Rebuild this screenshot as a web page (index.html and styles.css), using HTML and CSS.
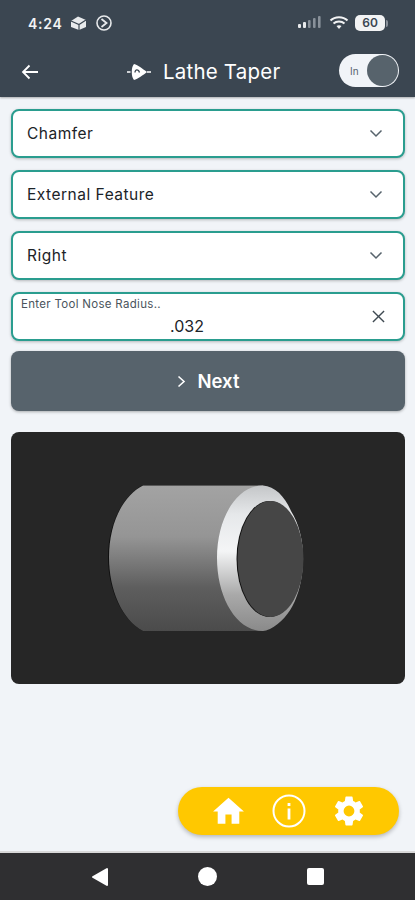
FILE: index.html
```html
<!DOCTYPE html>
<html>
<head>
<title>Lathe Taper</title>
<link rel="stylesheet" href="styles.css">
</head>
<body>

  <header class="app-header">
    <div class="status-bar">
      <div class="status-left">
        <span class="clock">4:24</span>
        <svg class="status-icon" width="17" height="16" viewBox="0 0 17 16">
          <path d="M1 6 L8 1.5 L16 5 V12 L9 15 L1 12 Z" fill="#e8eaec"/>
          <path d="M1 6 L9 9.5 L16 5 M9 9.5 V15" fill="none" stroke="#3b4651" stroke-width="1.2"/>
        </svg>
        <svg class="status-icon" width="18" height="18" viewBox="0 0 18 18">
          <circle cx="9" cy="9" r="7" fill="none" stroke="#e8eaec" stroke-width="1.6"/>
          <path d="M6.5 5 L11.5 9 L6.5 13" fill="none" stroke="#e8eaec" stroke-width="1.8"/>
        </svg>
      </div>
      <div class="status-right">
        <svg width="26" height="16" viewBox="0 0 26 16">
          <rect x="1" y="9" width="3" height="4" rx="1" fill="#e8eaec"/>
          <rect x="6" y="7" width="3" height="6" rx="1" fill="#e8eaec"/>
          <rect x="11" y="5" width="2.6" height="8" rx="1" fill="#89919a"/>
          <rect x="16" y="3" width="2.6" height="10" rx="1" fill="#89919a"/>
          <rect x="21" y="1" width="2.6" height="12" rx="1" fill="#89919a"/>
        </svg>
        <svg width="20" height="16" viewBox="0 0 20 16">
          <path d="M1.5 5.5 C6 1 14 1 18.5 5.5 M4.5 8.5 C7.5 5.8 12.5 5.8 15.5 8.5" fill="none" stroke="#f2f3f4" stroke-width="2"/>
          <path d="M7.5 11 C9 10 11 10 12.5 11 L10 14 Z" fill="#f2f3f4"/>
        </svg>
        <div class="battery"><span class="battery-level">60</span><span class="battery-cap"></span></div>
      </div>
    </div>
    <div class="title-bar">
      <svg class="back-arrow" width="18" height="16" viewBox="0 0 18 16">
        <path d="M17 8 H2 M8.5 1.5 L2 8 L8.5 14.5" fill="none" stroke="#fff" stroke-width="1.8"/>
      </svg>
      <div class="title-group">
        <svg width="24" height="18" viewBox="0 0 24 18">
          <path d="M7 1 C11 2 16 6 20 9 C16 12 11 16 7 17 C4 14 4 4 7 1 Z" fill="#fff"/>
          <path d="M0 9 H3.5 M20 9 H24" stroke="#fff" stroke-width="1.3"/>
          <path d="M8 9.5 C8 6 11.5 6 12.5 9.5" fill="none" stroke="#3b4651" stroke-width="1.3"/>
        </svg>
        <span class="app-title">Lathe Taper</span>
      </div>
      <div class="unit-toggle">
        <span class="unit-label">In</span>
        <span class="unit-knob"></span>
      </div>
    </div>
  </header>

  <main class="content">
    <div class="field select-field">
      <span>Chamfer</span>
      <svg class="chevron" width="14" height="9" viewBox="0 0 14 9"><path d="M1.5 1.5 L7 7 L12.5 1.5" fill="none" stroke="#57636c" stroke-width="1.5"/></svg>
    </div>
    <div class="field select-field">
      <span>External Feature</span>
      <svg class="chevron" width="14" height="9" viewBox="0 0 14 9"><path d="M1.5 1.5 L7 7 L12.5 1.5" fill="none" stroke="#57636c" stroke-width="1.5"/></svg>
    </div>
    <div class="field select-field">
      <span>Right</span>
      <svg class="chevron" width="14" height="9" viewBox="0 0 14 9"><path d="M1.5 1.5 L7 7 L12.5 1.5" fill="none" stroke="#57636c" stroke-width="1.5"/></svg>
    </div>
    <div class="field input-field">
      <div class="input-text">
        <span class="input-label">Enter Tool Nose Radius..</span>
        <span class="input-value">.032</span>
      </div>
      <svg class="clear-icon" width="13" height="13" viewBox="0 0 14 14"><path d="M1 1 L13 13 M13 1 L1 13" fill="none" stroke="#3f4a52" stroke-width="1.5"/></svg>
    </div>

    <button class="next-button">
      <svg width="9" height="13" viewBox="0 0 9 13"><path d="M1.5 1.5 L7 6.5 L1.5 11.5" fill="none" stroke="#fff" stroke-width="1.6"/></svg>
      <span>Next</span>
    </button>

    <div class="picture-card">
      <svg class="part-drawing" width="394" height="252" viewBox="11 432 394 252">
        <defs>
          <linearGradient id="bodyShade" x1="0" y1="0" x2="0" y2="1">
            <stop offset="0" stop-color="#a3a3a3"/>
            <stop offset="0.35" stop-color="#959595"/>
            <stop offset="0.7" stop-color="#5e5e5e"/>
            <stop offset="1" stop-color="#4b4b4b"/>
          </linearGradient>
          <linearGradient id="ringShade" x1="0" y1="0" x2="0" y2="1">
            <stop offset="0" stop-color="#c4c6c8"/>
            <stop offset="0.2" stop-color="#e6e8ea"/>
            <stop offset="0.45" stop-color="#f4f5f6"/>
            <stop offset="0.75" stop-color="#a9a9a9"/>
            <stop offset="1" stop-color="#8a8a8a"/>
          </linearGradient>
        </defs>
        <path class="part-edge" d="M143 485 H263 V631 H143 C122 620 108 590 108 557 C108 525 122 496 143 485 Z"/>
        <path d="M143 485.5 H263 V631 H143 C122 620 109 590 109 557 C109 525 122 496 143 485.5 Z" fill="url(#bodyShade)"/>
        <path d="M263 485.5 C275 486 285 497 291 511 C299 524 303 540 303 558 C303 590 292 618 270 629 C267 630 265 631 263 631 C236 631 217 597 217 558 C217 519 236 485.5 263 485.5 Z" fill="url(#ringShade)"/>
        <ellipse class="part-edge" cx="269.5" cy="559" rx="33" ry="58"/>
        <ellipse class="part-face" cx="270.5" cy="559" rx="33" ry="58"/>
      </svg>
    </div>
  </main>

  <div class="nav-row">
    <nav class="nav-pill">
      <svg width="37" height="37" viewBox="0 0 24 24"><path d="M10 20v-6h4v6h5v-8h3L12 3 2 12h3v8z" fill="#fff"/></svg>
      <svg width="34" height="34" viewBox="0 0 34 34">
        <circle cx="17" cy="17" r="15.5" fill="none" stroke="#fff" stroke-width="2"/>
        <rect x="15.6" y="14.5" width="2.8" height="11" fill="#fff"/>
        <rect x="15.6" y="9" width="2.8" height="3" fill="#fff"/>
      </svg>
      <svg width="36" height="36" viewBox="0 0 24 24"><path fill="#fff" d="M19.14 12.94c.04-.3.06-.61.06-.94s-.02-.64-.07-.94l2.03-1.58a.49.49 0 0 0 .12-.61l-1.92-3.32a.49.49 0 0 0-.59-.22l-2.39.96a7 7 0 0 0-1.62-.94l-.36-2.54a.48.48 0 0 0-.48-.41h-3.84a.48.48 0 0 0-.47.41l-.36 2.54c-.59.24-1.13.57-1.62.94l-2.39-.96a.48.48 0 0 0-.59.22L2.74 8.87a.48.48 0 0 0 .12.61l2.03 1.58c-.05.3-.09.63-.09.94s.02.64.07.94l-2.03 1.58a.49.49 0 0 0-.12.61l1.92 3.32c.12.22.37.29.59.22l2.39-.96c.5.38 1.03.7 1.62.94l.36 2.54c.05.24.24.41.48.41h3.84c.24 0 .44-.17.47-.41l.36-2.54c.59-.24 1.13-.56 1.62-.94l2.39.96c.22.08.47 0 .59-.22l1.92-3.32a.48.48 0 0 0-.12-.61l-2.01-1.58zM12 15.6A3.6 3.6 0 1 1 12 8.4a3.6 3.6 0 0 1 0 7.2z"/></svg>
    </nav>
  </div>

  <footer class="system-nav">
    <svg width="18" height="20" viewBox="0 0 18 20"><path d="M16 2 V18 L2 10 Z" fill="#fff" stroke="#fff" stroke-width="2" stroke-linejoin="round"/></svg>
    <span class="sys-circle"></span>
    <span class="sys-square"></span>
  </footer>

</body>
</html>
```

FILE: styles.css
```css
* {
  box-sizing: border-box;
}

body {
  margin: 0;
  height: 900px;
  display: flex;
  flex-direction: column;
  background: #f1f4f8;
  font-family: "Inter", "Liberation Sans", sans-serif;
  overflow: hidden;
}

/* header + status bar */
.app-header {
  height: 97px;
  flex-shrink: 0;
  background: #3b4651;
  color: #fff;
  box-shadow: 0 1px 2px rgba(0, 0, 0, 0.3);
}

.status-bar {
  height: 44px;
  padding: 2px 27px 0 28px;
  display: flex;
  align-items: center;
  justify-content: space-between;
}

.status-left,
.status-right {
  display: flex;
  align-items: center;
}

.status-left {
  gap: 8px;
}

.status-right {
  gap: 6px;
}

.clock {
  font-size: 14px;
  font-weight: 600;
  letter-spacing: 0.7px;
  color: #f2f3f4;
}

.battery {
  display: flex;
  align-items: center;
}

.battery-level {
  width: 30px;
  height: 16px;
  border-radius: 5px;
  background: #f2f3f4;
  color: #3b4651;
  font-size: 12px;
  font-weight: 600;
  line-height: 16px;
  text-align: center;
}

.battery-cap {
  width: 2px;
  height: 7px;
  margin-left: 1px;
  border-radius: 0 2px 2px 0;
  background: #89919a;
}

.title-bar {
  height: 53px;
  padding: 0 16px 0 21px;
  display: flex;
  align-items: center;
}

.back-arrow {
  flex-shrink: 0;
  margin-top: 2px;
}

.title-group {
  margin-top: 2px;
  margin-left: 88px;
  display: flex;
  align-items: center;
  gap: 12px;
}

.app-title {
  font-size: 20.5px;
  font-weight: 400;
  letter-spacing: 0.2px;
}

.unit-toggle {
  margin-left: auto;
  width: 60px;
  height: 33px;
  padding: 0 1px 0 11px;
  border-radius: 17px;
  background: #f1f4f8;
  display: flex;
  align-items: center;
  justify-content: space-between;
}

.unit-label {
  font-size: 10px;
  color: #57636c;
}

.unit-knob {
  width: 31px;
  height: 31px;
  border-radius: 50%;
  background: #57636c;
}

/* form */
.content {
  padding: 12px 10px 0 11px;
  display: flex;
  flex-direction: column;
}

.field {
  height: 49px;
  margin-bottom: 12px;
  padding: 0 20px 0 14px;
  display: flex;
  align-items: center;
  justify-content: space-between;
  background: #fff;
  border: 2px solid #2a9d8f;
  border-radius: 8px;
  box-shadow: 0 1px 3px rgba(0, 0, 0, 0.25);
  font-size: 15.5px;
  letter-spacing: 0.5px;
  color: #1c2328;
}

.input-field {
  margin-bottom: 10px;
  padding: 0 18px 0 8px;
}

.input-text {
  flex: 1;
  display: flex;
  flex-direction: column;
}

.input-label {
  font-size: 11.5px;
  letter-spacing: 0.3px;
  line-height: 14px;
  margin-top: -1px;
  color: #4a545c;
}

.input-value {
  margin-top: 6px;
  padding-right: 19px;
  font-size: 16px;
  line-height: 18px;
  letter-spacing: 0;
  text-align: center;
}

.clear-icon {
  flex-shrink: 0;
}

.next-button {
  height: 60px;
  margin-bottom: 21px;
  padding: 0;
  display: flex;
  align-items: center;
  justify-content: center;
  gap: 12px;
  border: none;
  border-radius: 8px;
  background: #57636c;
  color: #fff;
  font-family: inherit;
  font-size: 18.5px;
  font-weight: 600;
  box-shadow: 0 1px 3px rgba(0, 0, 0, 0.3);
}

.picture-card {
  height: 252px;
  border-radius: 8px;
  background: #262626;
  overflow: hidden;
}

.part-drawing {
  display: block;
}

.part-edge {
  fill: #0f0f0f;
}

.part-face {
  fill: #464646;
}

/* floating nav */
.nav-row {
  margin-top: auto;
  padding: 0 16px 16px 0;
  display: flex;
  justify-content: flex-end;
}

.nav-pill {
  width: 221px;
  height: 48px;
  padding: 0 32px 0 32px;
  display: flex;
  align-items: center;
  justify-content: space-between;
  border-radius: 24px;
  background: #ffc800;
  box-shadow: 0 2px 4px rgba(0, 0, 0, 0.25);
}

/* android nav */
.system-nav {
  height: 49px;
  flex-shrink: 0;
  padding: 0 91px;
  display: flex;
  align-items: center;
  justify-content: space-between;
  background: #2f2f31;
  border-top: 2px solid #d8d8d8;
}

.sys-circle {
  width: 19px;
  height: 19px;
  margin-right: 2px;
  border-radius: 50%;
  background: #fff;
}

.sys-square {
  width: 17px;
  height: 17px;
  border-radius: 2px;
  background: #fff;
}
```
